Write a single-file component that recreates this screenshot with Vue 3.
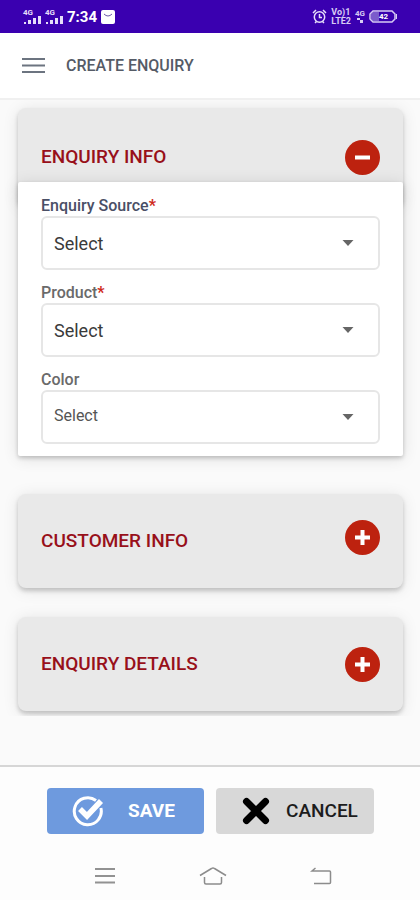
<script setup>
import { ref } from 'vue'

const fields = ref([
  { id: 'source', label: 'Enquiry Source', required: true, tone: 'navy' },
  { id: 'product', label: 'Product', required: true, tone: 'grey' },
  { id: 'color', label: 'Color', required: false, tone: 'grey', small: true },
])
const infoOpen = ref(true)
</script>

<template>
  <div class="screen">
    <div class="status">
      <div class="status-left">
        <span v-for="n in 2" :key="n" class="signal">
          <span class="net">4G</span>
          <svg width="18" height="8" viewBox="0 0 18 8" aria-hidden="true">
            <path d="M1 6h2v2H1zM5 4h3v4H5zM10 2h3v6h-3zM15 0h3v8h-3z" fill="#e6defa" />
          </svg>
        </span>
        <span class="clock">7:34</span>
        <svg width="14" height="14" viewBox="0 0 14 14" aria-hidden="true">
          <rect width="14" height="14" rx="2" fill="#fff" />
          <path d="M3 4q4 4 8 0" fill="none" stroke="#6b58a8" stroke-width="1" />
        </svg>
      </div>
      <div class="status-right">
        <svg width="15" height="15" viewBox="0 0 15 15" fill="none" stroke="#e6defa" stroke-width="1.5" aria-hidden="true">
          <circle cx="7.500" cy="8" r="5.200" />
          <path d="M7.500 5v3.500H10M1 4l3-3M14 4l-3-3M3 14l1.500-1.500M12 14l-1.500-1.500" />
        </svg>
        <span class="volte"><span>Vo)1</span><span>LTE2</span></span>
        <span class="data"><span>4G</span>
          <svg width="8" height="5" viewBox="0 0 8 5" aria-hidden="true"><path d="M1 0h3v2H1zM4 2h3v3H4z" fill="#d8ccf4" /></svg>
        </span>
        <span class="battery">
          <svg width="29" height="13" viewBox="0 0 29 13" aria-hidden="true">
            <path d="M4 2h6v9H4l-2-2V4z" fill="#7b5bcb" />
            <path d="M4 1h19l3 3v5l-3 3H4L1 9V4z" fill="none" stroke="#d8ccf4" stroke-width="1.500" />
            <path d="M27 4h1v5h-1z" fill="#d8ccf4" />
          </svg>
          <span class="level">42</span>
        </span>
      </div>
    </div>

    <header class="topbar">
      <button class="menu" type="button" aria-label="Menu">
        <svg width="23" height="17" viewBox="0 0 23 17" aria-hidden="true">
          <path d="M0 2h23M0 8.500h23M0 15h23" stroke="#6c7480" stroke-width="2" />
        </svg>
      </button>
      <h1>CREATE ENQUIRY</h1>
    </header>

    <main class="content">
      <section>
        <div class="card card-tall">
          <h2>ENQUIRY INFO</h2>
          <button class="toggle" type="button" aria-label="Collapse enquiry info" @click="infoOpen = !infoOpen">
            <svg width="35" height="35" viewBox="0 0 35 35" aria-hidden="true">
              <circle cx="17.500" cy="17.500" r="17.500" fill="#bd220f" />
              <path d="M10 17.500h15" stroke="#fff" stroke-width="4" />
            </svg>
          </button>
        </div>
        <form v-if="infoOpen" class="panel">
          <div v-for="f in fields" :key="f.id" class="field">
            <label :for="f.id" :class="f.tone">{{ f.label }}<b v-if="f.required">*</b></label>
            <div class="picker">
              <select :id="f.id" :class="{ small: f.small }">
                <option>Select</option>
              </select>
              <svg class="arrow" width="12" height="6" viewBox="0 0 12 6" aria-hidden="true">
                <path d="M0.500 0h11L6 6z" fill="#666" />
              </svg>
            </div>
          </div>
        </form>
      </section>

      <section class="card">
        <h2>CUSTOMER INFO</h2>
        <button class="toggle raised" type="button" aria-label="Expand customer info">
          <svg width="35" height="35" viewBox="0 0 35 35" aria-hidden="true">
            <circle cx="17.500" cy="17.500" r="17.500" fill="#bd220f" />
            <path d="M10 17.500h15M17.500 10v15" stroke="#fff" stroke-width="4" />
          </svg>
        </button>
      </section>

      <section class="card">
        <h2>ENQUIRY DETAILS</h2>
        <button class="toggle" type="button" aria-label="Expand enquiry details">
          <svg width="35" height="35" viewBox="0 0 35 35" aria-hidden="true">
            <circle cx="17.500" cy="17.500" r="17.500" fill="#bd220f" />
            <path d="M10 17.500h15M17.500 10v15" stroke="#fff" stroke-width="4" />
          </svg>
        </button>
      </section>
    </main>

    <footer class="actions">
      <button class="action save" type="button">
        <svg width="32" height="32" viewBox="0 0 32 32" fill="none" aria-hidden="true">
          <path d="M24 5.500A13.500 13.500 0 1 0 28.900 13" stroke="#fff" stroke-width="3" />
          <path d="M8 14l7 7L29 6" stroke="#fff" stroke-width="5.500" />
        </svg>
        <span>SAVE</span>
      </button>
      <button class="action cancel" type="button">
        <svg width="28" height="28" viewBox="0 0 28 28" aria-hidden="true">
          <path d="M4.500 4.500l19 19M23.500 4.500l-19 19" stroke="#000" stroke-width="7" stroke-linecap="round" />
        </svg>
        <span>CANCEL</span>
      </button>
    </footer>

    <nav class="sysnav">
      <button type="button" aria-label="Recent apps">
        <svg width="20" height="18" viewBox="0 0 20 18" aria-hidden="true">
          <path d="M0 2h20M0 9h20M0 15.500h20" stroke="#929292" stroke-width="2" />
        </svg>
      </button>
      <button type="button" aria-label="Home">
        <svg width="28" height="20" viewBox="0 0 28 20" fill="none" stroke="#8c8c8c" stroke-width="1.500" aria-hidden="true">
          <path d="M1 9.500L12.500 2.500q1.500-1 3 0L27 9.500M5.500 11v5.500q0 1.500 1.500 1.500h14q1.500 0 1.500-1.500V11" />
        </svg>
      </button>
      <button type="button" aria-label="Back">
        <svg width="22" height="18" viewBox="0 0 22 18" fill="none" stroke="#8c8c8c" stroke-width="1.500" aria-hidden="true">
          <path d="M5.500 1L2 4h17.500q1 0 1 1v10.500q0 1-1 1H4" />
        </svg>
      </button>
    </nav>
  </div>
</template>

<style>
body {
  margin: 0;
  background: #fdfdfd;
}
</style>

<style scoped>
.screen {
  min-height: 100vh;
  display: flex;
  flex-direction: column;
  background: #fafafa;
  font-family: Roboto, "Liberation Sans", sans-serif;
}
button {
  border: 0;
  padding: 0;
  background: none;
  font-family: inherit;
  cursor: pointer;
}
svg {
  display: block;
}
h1,
h2 {
  margin: 0;
  font-weight: 500;
}

.status {
  display: flex;
  justify-content: space-between;
  align-items: center;
  height: 33px;
  padding: 0 22px 0 23px;
  box-sizing: border-box;
  background: #3a00b0;
  color: #fff;
}
.status-left,
.status-right {
  display: flex;
  align-items: center;
  gap: 4px;
}
.signal {
  display: flex;
  flex-direction: column;
  color: #e6defa;
}
.net {
  font-size: 8px;
  line-height: 7px;
  font-weight: 700;
}
.clock {
  font-size: 15px;
  line-height: 18px;
  font-weight: 700;
}
.volte {
  display: flex;
  flex-direction: column;
  font-size: 9px;
  line-height: 9px;
  font-weight: 700;
  color: #d8ccf4;
}
.data {
  display: flex;
  flex-direction: column;
  align-items: center;
  font-size: 8px;
  line-height: 8px;
  font-weight: 700;
  color: #d8ccf4;
}
.battery {
  display: grid;
  place-items: center;
}
.battery > * {
  grid-area: 1 / 1;
}
.level {
  font-size: 8px;
  line-height: 9px;
  font-weight: 700;
}

.topbar {
  display: flex;
  align-items: center;
  gap: 21px;
  height: 65px;
  padding: 0 22px;
  background: #fff;
  border-bottom: 2px solid #f0f0f0;
}
.topbar h1 {
  font-size: 16px;
  line-height: 20px;
  color: #555b66;
}

.content {
  padding: 8px 17px 5px 18px;
  overflow: hidden;
}
.card {
  display: flex;
  align-items: center;
  justify-content: space-between;
  height: 94px;
  box-sizing: border-box;
  padding: 0 23px;
  border-radius: 8px;
  background: #e9e9e9;
  box-shadow: 0 3px 4px rgba(0, 0, 0, 0.18), 0 2px 16px rgba(0, 0, 0, 0.1);
}
.card + .card {
  margin-top: 29px;
}
.card-tall {
  height: 98px;
}
.card h2 {
  font-size: 19px;
  line-height: 24px;
  color: #98101a;
}
.toggle.raised {
  margin-bottom: 8px;
}
.panel {
  position: relative;
  margin: -24px 0 38px;
  padding: 14px 23px 12px;
  background: #fff;
  border-radius: 2px;
  box-shadow: 0 2px 4px rgba(0, 0, 0, 0.2), 0 2px 16px rgba(0, 0, 0, 0.12);
  display: flex;
  flex-direction: column;
  gap: 13px;
}
.field label {
  display: block;
  font-size: 16px;
  line-height: 20px;
  font-weight: 500;
}
.navy {
  color: #4a4f66;
}
.grey {
  color: #6a6a6a;
}
.field b {
  color: #cf2a1c;
}
.picker {
  display: grid;
  align-items: center;
}
.picker > * {
  grid-area: 1 / 1;
}
select {
  appearance: none;
  width: 100%;
  height: 54px;
  box-sizing: border-box;
  margin: 0;
  padding: 0 40px 0 11px;
  border: 2px solid #e6e6e6;
  border-radius: 6px;
  background: #fff;
  font-family: inherit;
  font-size: 18px;
  color: #3a3a3a;
}
select.small {
  padding-bottom: 4px;
  font-size: 16px;
  color: #555;
}
.arrow {
  justify-self: end;
  margin-right: 26px;
  pointer-events: none;
}

.actions {
  display: flex;
  justify-content: center;
  gap: 12px;
  margin-top: auto;
  padding: 21px 46px 14px 47px;
  border-top: 2px solid #d6d6d6;
  background: #fdfdfd;
}
.action {
  flex: 1;
  display: flex;
  align-items: center;
  height: 46px;
  border-radius: 4px;
  font-size: 19px;
  line-height: 24px;
}
.save {
  gap: 24px;
  padding-left: 25px;
  background: #6e9ade;
  color: #fff;
  font-weight: 700;
}
.cancel {
  gap: 16px;
  padding-left: 26px;
  background: #d8d8d8;
  color: #1c1c1c;
  font-weight: 500;
}
.sysnav {
  display: flex;
  justify-content: space-between;
  align-items: center;
  padding: 18px 88px 14px 95px;
  background: #fdfdfd;
}
</style>
